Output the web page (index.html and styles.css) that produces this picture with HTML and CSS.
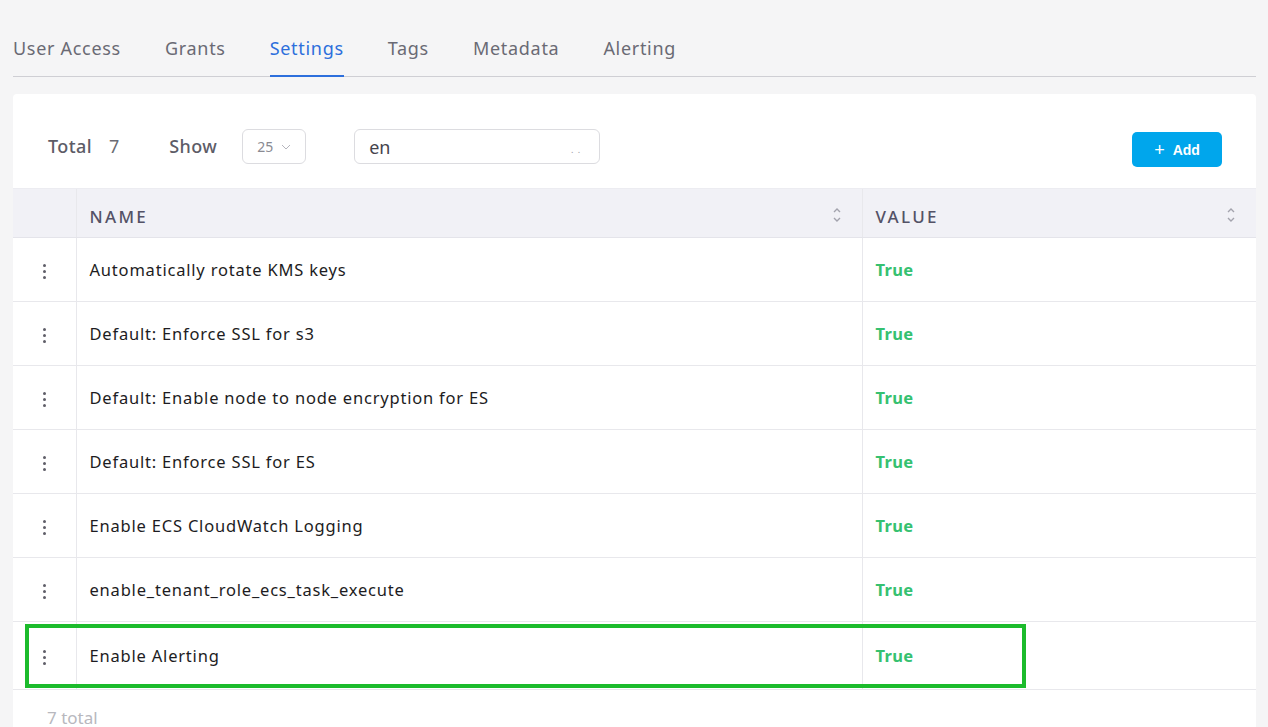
FILE: index.html
```html
<!DOCTYPE html>
<html>
<head>
<meta charset="utf-8">
<link rel="stylesheet" href="styles.css">
</head>
<body>
<div class="page">
  <nav class="tabs">
    <span class="tab">User Access</span>
    <span class="tab">Grants</span>
    <span class="tab active">Settings</span>
    <span class="tab">Tags</span>
    <span class="tab">Metadata</span>
    <span class="tab">Alerting</span>
  </nav>
  <section class="card">
    <div class="toolbar">
      <span class="lbl">Total</span><span class="num">7</span>
      <span class="lbl show">Show</span>
      <div class="select">25 <svg width="10" height="6" viewBox="0 0 10 6"><path d="M1 1l4 4 4-4" fill="none" stroke="#b5b5bd" stroke-width="1"/></svg></div>
      <div class="search"><span>en</span><span class="dots">. .</span></div>
      <div class="spacer"></div>
      <button class="add"><span class="plus">+</span>Add</button>
    </div>
    <table class="grid">
      <thead>
        <tr>
          <th class="c0"></th>
          <th class="c1"><div class="hd">NAME<svg class="sort" width="10" height="18" viewBox="0 0 10 18"><path d="M2 6l3-3 3 3M2 12l3 3 3-3" fill="none" stroke="#a3a3ad" stroke-width="1.4"/></svg></div></th>
          <th class="c2"><div class="hd">VALUE<svg class="sort" width="10" height="18" viewBox="0 0 10 18"><path d="M2 6l3-3 3 3M2 12l3 3 3-3" fill="none" stroke="#a3a3ad" stroke-width="1.4"/></svg></div></th>
        </tr>
      </thead>
      <tbody>
        <tr><td class="c0"><span class="kebab"><i></i><i></i><i></i></span></td><td>Automatically rotate KMS keys</td><td class="val">True</td></tr>
        <tr><td class="c0"><span class="kebab"><i></i><i></i><i></i></span></td><td>Default: Enforce SSL for s3</td><td class="val">True</td></tr>
        <tr><td class="c0"><span class="kebab"><i></i><i></i><i></i></span></td><td>Default: Enable node to node encryption for ES</td><td class="val">True</td></tr>
        <tr><td class="c0"><span class="kebab"><i></i><i></i><i></i></span></td><td>Default: Enforce SSL for ES</td><td class="val">True</td></tr>
        <tr><td class="c0"><span class="kebab"><i></i><i></i><i></i></span></td><td>Enable ECS CloudWatch Logging</td><td class="val">True</td></tr>
        <tr><td class="c0"><span class="kebab"><i></i><i></i><i></i></span></td><td>enable_tenant_role_ecs_task_execute</td><td class="val">True</td></tr>
        <tr class="last"><td class="c0"><span class="kebab"><i></i><i></i><i></i></span></td><td>Enable Alerting</td><td class="val">True</td></tr>
      </tbody>
    </table>
    <div class="footer">7 total</div>
    <div class="highlight"></div>
  </section>
</div>
</body>
</html>
```
FILE: styles.css
```css
html, body { margin: 0; padding: 0; }
body {
  background: #f5f5f6;
  font-family: "Noto Sans", sans-serif;
  width: 1268px;
  height: 727px;
  overflow: hidden;
}
.page {
  padding: 0 12px 0 13px;
}
.tabs {
  display: flex;
  height: 76px;
  border-bottom: 1px solid #cfcfd4;
  align-items: flex-end;
  font-size: 18px;
  letter-spacing: 0.7px;
  color: #6a6a74;
}
.tab {
  padding-bottom: 16px;
  margin-right: 44px;
  border-bottom: 2px solid transparent;
  margin-bottom: -1px;
  line-height: 22px;
}
.tab.active {
  color: #2d6fdc;
  border-bottom-color: #2d6fdc;
}
.card {
  position: relative;
  margin-top: 17px;
  background: #fff;
  border-radius: 4px;
  height: 700px;
}
.toolbar {
  display: flex;
  align-items: flex-start;
  box-sizing: border-box;
  height: 94px;
  padding: 35px 34px 0 35px;
  color: #5d5c67;
}
.lbl {
  font-weight: 500;
  font-size: 18px;
  letter-spacing: 0.4px;
  line-height: 35px;
}
.num { font-size: 18px; line-height: 35px; margin-left: 17px; color: #6b6b74; }
.show { margin-left: 50px; }
.select {
  margin-left: 25px;
  width: 64px;
  height: 35px;
  box-sizing: border-box;
  border: 1px solid #dcdce0;
  border-radius: 6px;
  display: flex;
  align-items: center;
  gap: 8px;
  padding-left: 14px;
  font-size: 14px;
  color: #8a8a92;
}
.search {
  margin-left: 48px;
  width: 246px;
  height: 35px;
  box-sizing: border-box;
  border: 1px solid #dcdce0;
  border-radius: 6px;
  display: flex;
  align-items: center;
  justify-content: space-between;
  padding: 0 18px 0 14px;
  font-size: 18px;
  color: #45444d;
}
.dots { font-size: 9px; color: #9a9aa2; padding-top: 6px; letter-spacing: 1px; }
.spacer { flex: 1; }
.add {
  width: 90px;
  height: 35px;
  margin-top: 3px;
  border: 0;
  border-radius: 5px;
  background: #00a6ec;
  color: #fff;
  font-family: "Liberation Sans", sans-serif;
  font-weight: bold;
  font-size: 14px;
  display: flex;
  align-items: center;
  justify-content: center;
  gap: 8px;
  padding: 0;
}
.plus { font-weight: normal; font-size: 18px; line-height: 1; }
.grid {
  width: 100%;
  border-collapse: collapse;
  table-layout: fixed;
  font-size: 16.5px;
  font-weight: 400;
  letter-spacing: 0.8px;
  color: #1d1c22;
}
.grid th {
  background: #f1f1f6;
  height: 49px;
  text-align: left;
  font-weight: 500;
  font-size: 17px;
  letter-spacing: 2.3px;
  color: #545266;
  border-top: 1px solid #ececf1;
  border-bottom: 1px solid #e4e4ea;
  padding: 6px 13px 0;
  box-sizing: border-box;
}
.grid th.c0 { padding: 0; }
.hd { display: flex; align-items: center; justify-content: space-between; }
.sort { margin-right: 7px; margin-top: -3px; }
.c0 { width: 63px; }
.c1 { width: 786px; }
.grid td {
  height: 63px;
  border-bottom: 1px solid #e8e8ec;
  padding: 0 13px;
  white-space: nowrap;
}
.grid tr.last td { height: 67px; }
.grid th + th, .grid td + td { border-left: 1px solid #e8e8ec; }
.grid td.c0 { padding: 0; text-align: center; }
.kebab { display: inline-flex; flex-direction: column; gap: 3px; vertical-align: middle; }
.kebab i { width: 3px; height: 3px; border-radius: 50%; background: #5f5e68; display: block; }
.val { color: #36c170; font-weight: bold; letter-spacing: 0.3px; }
.footer {
  padding: 16px 34px;
  color: #b8b8be;
  font-size: 17px;
}
.highlight {
  position: absolute;
  left: 12px;
  top: 530px;
  width: 1001px;
  height: 64px;
  box-sizing: border-box;
  border: 4px solid #1cbb2c;
  pointer-events: none;
}
```
